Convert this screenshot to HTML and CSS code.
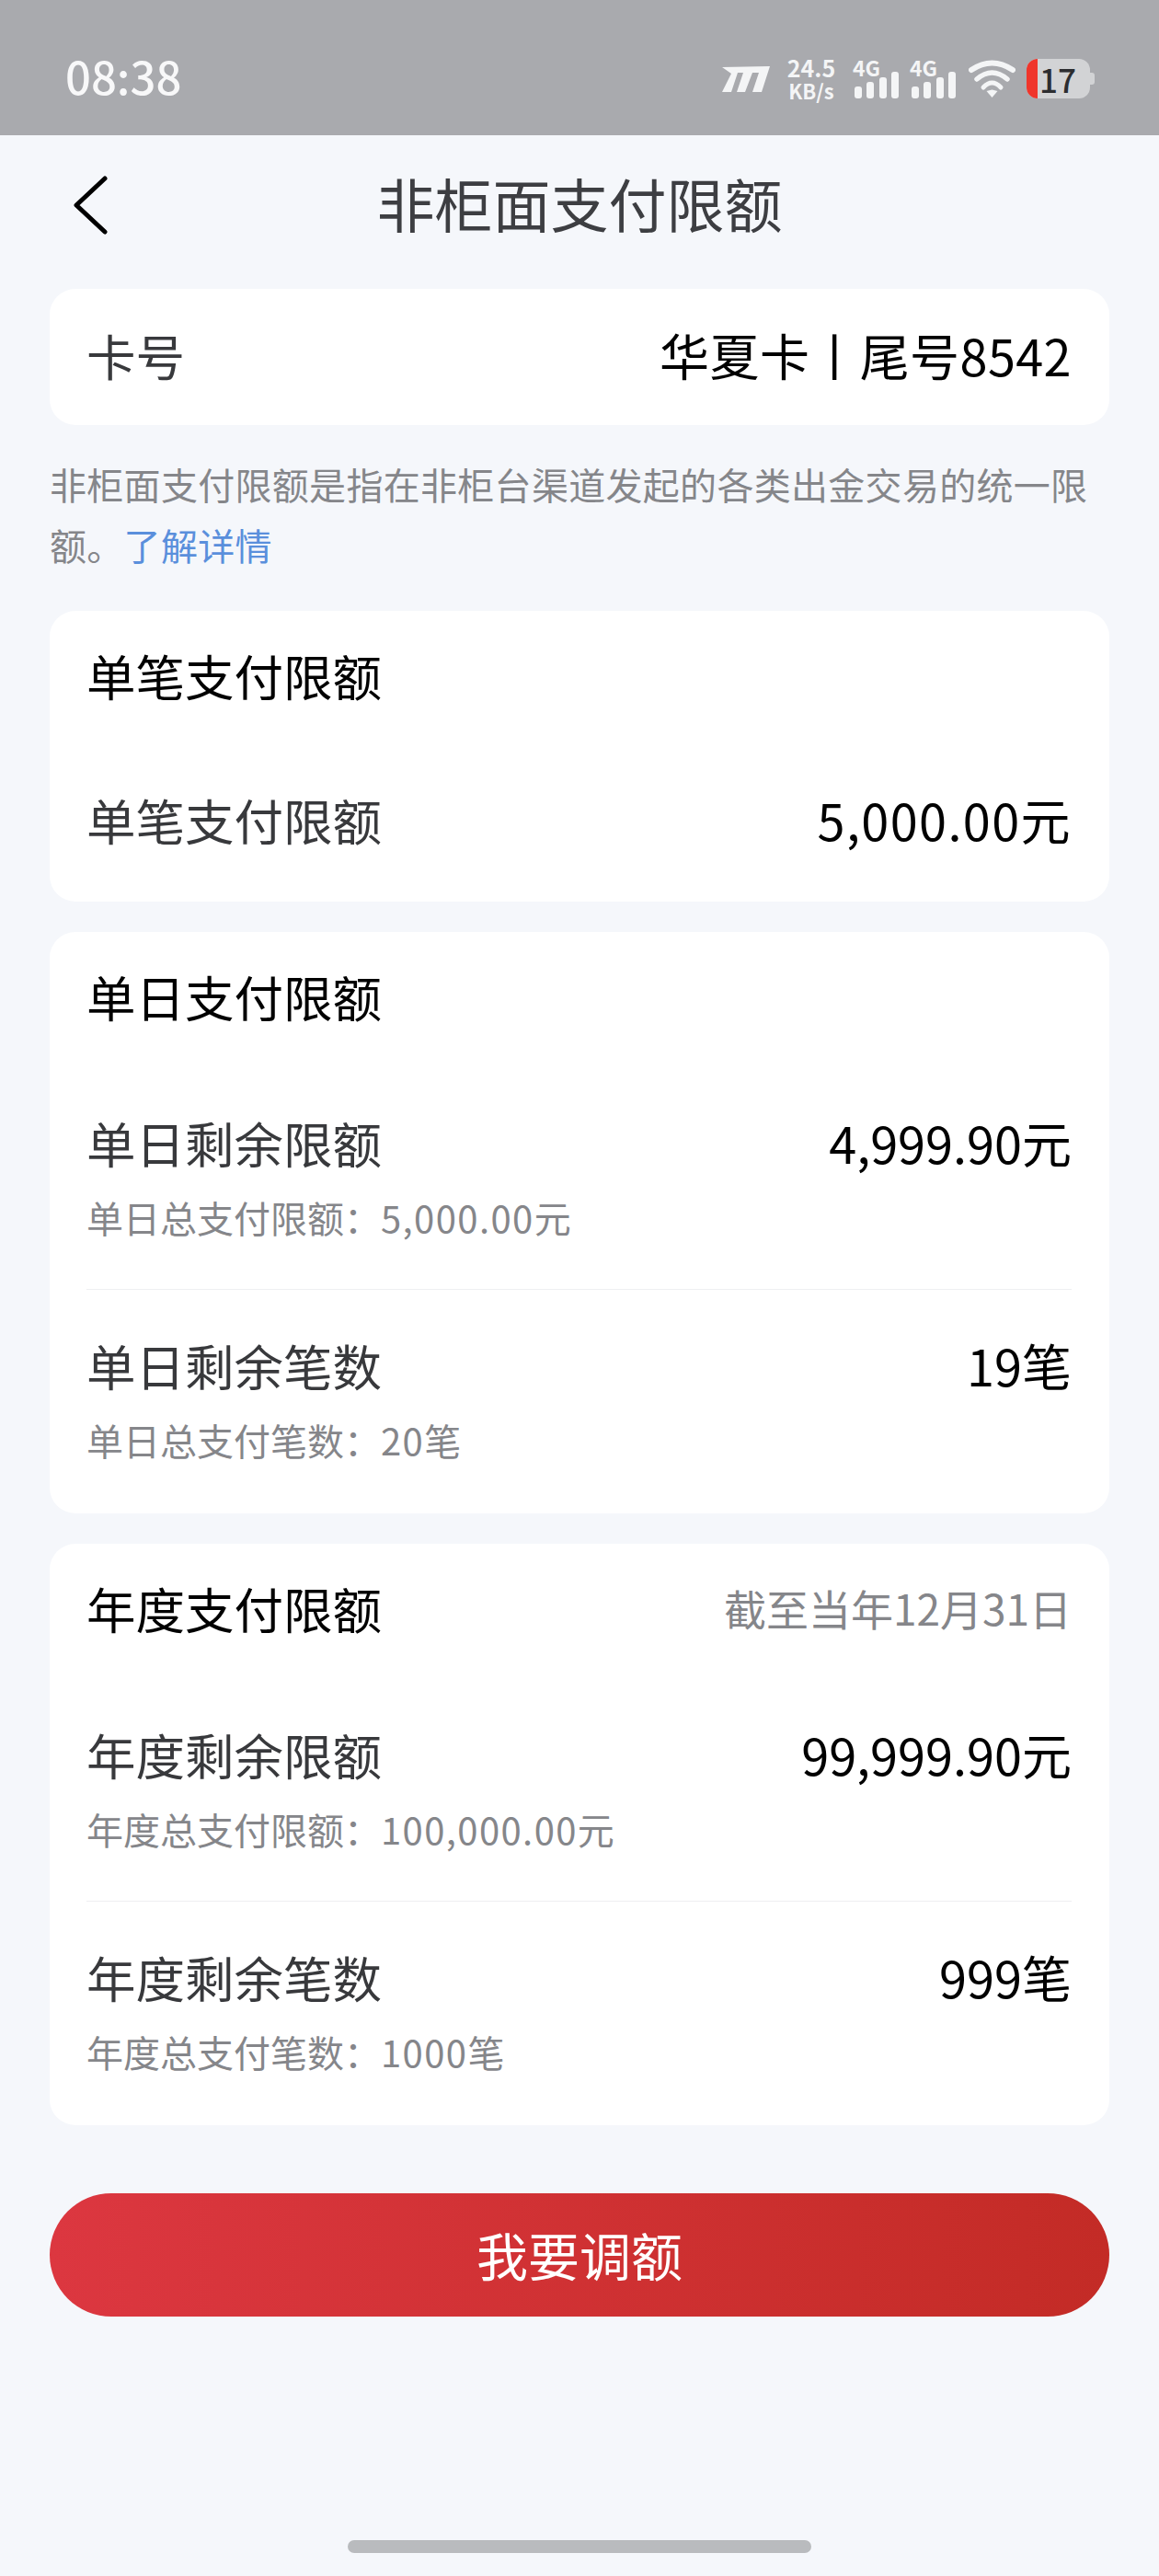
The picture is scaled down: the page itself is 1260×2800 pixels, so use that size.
FILE: index.html
```html
<!DOCTYPE html>
<html lang="zh-CN">
<head>
  <meta charset="UTF-8" />
  <meta name="viewport" content="width=device-width, initial-scale=1.0"/>
  <title>非柜面支付限额</title>
  <link rel="stylesheet" href="styles.css">
</head>
<body>
  <!-- 状态栏 -->
  <div class="status-bar">
    <span class="time">08:38</span>
    <div class="status-icons">
      <svg class="carrier" width="52" height="28" viewBox="0 0 52 28">
        <path d="M0 1L52 0L43 28H33L40 7H33L25 28H16L23 7H17L10 28H0L10 8Z" fill="#f4f5f6"/>
      </svg>
      <div class="speed"><span>24.5</span><span class="unit">KB/s</span></div>
      <div class="signal">
        <span class="net">4G</span>
        <div class="bars"><i class="b1"></i><i class="b2"></i><i class="b3"></i><i class="b4"></i></div>
      </div>
      <div class="signal">
        <span class="net">4G</span>
        <div class="bars"><i class="b1"></i><i class="b2"></i><i class="b3"></i><i class="b4"></i></div>
      </div>
      <svg class="wifi" width="51" height="42" viewBox="0 0 51 42" fill="none" stroke="#f4f5f6" stroke-linecap="round">
        <path d="M3 11Q25.5 -4 48 11" stroke-width="6"/>
        <path d="M9 21Q25.5 7 42 21" stroke-width="5.5"/>
        <path d="M16 30Q25.5 20 35 30" stroke-width="5"/>
        <path d="M19.5 34L25.5 32.5L31.5 34L25.5 41Z" fill="#f4f5f6" stroke="none"/>
      </svg>
      <div class="battery">
        <div class="battery-body"><span class="battery-low"></span><span class="battery-num">17</span></div>
        <span class="battery-cap"></span>
      </div>
    </div>
  </div>

  <!-- 标题栏 -->
  <div class="nav">
    <svg class="back" width="40" height="64" viewBox="0 0 40 64" fill="none" stroke="#000" stroke-width="5" stroke-linecap="round" stroke-linejoin="round">
      <path d="M36 3L5 32L36 61"/>
    </svg>
    <h1>非柜面支付限额</h1>
  </div>

  <div class="content">
    <div class="card card-no">
      <span class="row-label">卡号</span>
      <span class="row-value">华夏卡丨尾号8542</span>
    </div>

    <p class="note">非柜面支付限额是指在非柜台渠道发起的各类出金交易的统一限额。<a>了解详情</a></p>

    <div class="card">
      <div class="card-title"><span>单笔支付限额</span></div>
      <div class="row">
        <div class="row-main"><span class="row-label">单笔支付限额</span><span class="row-value num">5,000.00元</span></div>
      </div>
    </div>

    <div class="card">
      <div class="card-title"><span>单日支付限额</span></div>
      <div class="row first">
        <div class="row-main"><span class="row-label">单日剩余限额</span><span class="row-value">4,999.90元</span></div>
        <div class="row-sub">单日总支付限额：<span class="num">5,000.00元</span></div>
      </div>
      <div class="row last">
        <div class="row-main"><span class="row-label">单日剩余笔数</span><span class="row-value">19笔</span></div>
        <div class="row-sub">单日总支付笔数：<span class="num">20笔</span></div>
      </div>
    </div>

    <div class="card">
      <div class="card-title"><span>年度支付限额</span><span class="deadline">截至当年12月31日</span></div>
      <div class="row first">
        <div class="row-main"><span class="row-label">年度剩余限额</span><span class="row-value">99,999.90元</span></div>
        <div class="row-sub">年度总支付限额：<span class="num">100,000.00元</span></div>
      </div>
      <div class="row last">
        <div class="row-main"><span class="row-label">年度剩余笔数</span><span class="row-value">999笔</span></div>
        <div class="row-sub">年度总支付笔数：<span class="num">1000笔</span></div>
      </div>
    </div>

    <button class="adjust">我要调额</button>
  </div>

  <div class="home-bar"></div>
</body>
</html>
```

FILE: styles.css
```css
* {
  box-sizing: border-box;
  margin: 0;
  padding: 0;
}
body {
  font-family: "Noto Sans CJK SC", "Noto Sans", sans-serif;
  background-color: #f5f7fb;
  width: 1260px;
  height: 2800px;
  position: relative;
  overflow: hidden;
}
/* 状态栏 */
.status-bar {
  height: 147px;
  background-color: #a9aaae;
  padding: 24px 70px 0 71px;
  display: flex;
  justify-content: space-between;
  align-items: center;
}
.time {
  font-size: 49px;
  line-height: 52px;
  font-weight: 500;
  color: #f8f8f9;
  margin-bottom: 8px;
}
.status-icons {
  display: flex;
  align-items: center;
}
.carrier {
  margin-right: 19px;
}
.speed {
  display: flex;
  flex-direction: column;
  align-items: center;
  width: 52px;
  margin-right: 19px;
  color: #f4f5f6;
  font-weight: 700;
  font-size: 25px;
  line-height: 25px;
  white-space: nowrap;
}
.speed .unit {
  font-size: 22px;
}
.signal {
  position: relative;
  width: 50px;
  height: 42px;
  margin-right: 12px;
}
.net {
  position: absolute;
  left: 0;
  top: -4px;
  font-size: 23px;
  line-height: 24px;
  font-weight: 700;
  color: #f4f5f6;
}
.bars {
  position: absolute;
  left: 2px;
  bottom: 0;
  display: flex;
  align-items: flex-end;
  gap: 5.3px;
}
.bars i {
  display: block;
  width: 8px;
  background-color: #f4f5f6;
  border-radius: 3px;
}
.bars .b1 { height: 13px; }
.bars .b2 { height: 18px; }
.bars .b3 { height: 23px; }
.bars .b4 { height: 29px; }
.wifi {
  margin: 0 12px 0 2px;
}
.battery {
  display: flex;
  align-items: center;
}
.battery-body {
  width: 69px;
  height: 43px;
  border-radius: 12px;
  background-color: #d2d3d5;
  display: flex;
  align-items: center;
}
.battery-low {
  width: 12px;
  height: 100%;
  border-radius: 12px 0 0 12px;
  background-color: #f0352b;
}
.battery-num {
  margin-left: 2px;
  font-size: 35px;
  line-height: 43px;
  font-weight: 500;
  color: #2c2d30;
}
.battery-cap {
  width: 5px;
  height: 13px;
  background-color: #d2d3d5;
  border-radius: 0 3px 3px 0;
}
/* 标题栏 */
.nav {
  height: 167px;
  padding-bottom: 22px;
  position: relative;
  display: flex;
  justify-content: center;
  align-items: center;
}
.nav h1 {
  font-size: 63px;
  font-weight: 400;
  color: #3d3e42;
}
.back {
  position: absolute;
  left: 78px;
  top: 44px;
}
/* 内容区 */
.content {
  padding: 0 54px;
}
.card {
  background-color: #fff;
  border-radius: 28px;
  padding: 0 41px 0 40px;
  margin-bottom: 33px;
}
.card-no {
  height: 148px;
  padding-bottom: 6px;
  margin-bottom: 0;
  display: flex;
  justify-content: space-between;
  align-items: center;
}
.card-no .row-value {
  letter-spacing: 0.4px;
}
.row-label {
  font-size: 53.5px;
  color: #38393c;
}
.row-value {
  font-size: 54px;
  color: #000;
}
/* 含 0 的金额，数字略宽 */
.num {
  letter-spacing: 1.4px;
}
.note {
  font-size: 40px;
  line-height: 66px;
  letter-spacing: 0.3px;
  color: #85868a;
  padding: 31px 0 39px;
}
.note a {
  color: #5a8fdc;
}
.card-title {
  display: flex;
  justify-content: space-between;
  align-items: center;
  height: 138px;
  font-size: 53.5px;
  color: #000;
}
.deadline {
  font-size: 46px;
  color: #85868a;
}
.row-main {
  display: flex;
  justify-content: space-between;
  align-items: center;
  height: 78px;
}
.row {
  padding: 49px 0 51px;
}
.row.first {
  padding: 51px 0 48px;
  border-bottom: 1px solid #eeeff1;
}
.row.last {
  padding: 42px 0 50px;
}
.row-sub {
  margin-top: 13px;
  font-size: 40px;
  line-height: 60px;
  color: #85868a;
}
/* 调额按钮 */
.adjust {
  display: block;
  width: 100%;
  height: 134px;
  margin-top: 74px;
  padding-bottom: 4px;
  border: none;
  border-radius: 67px;
  background: linear-gradient(90deg, #dc3740, #c32b26);
  color: #fff;
  font-family: inherit;
  font-size: 56px;
}
.home-bar {
  position: absolute;
  left: 378px;
  top: 2761px;
  width: 504px;
  height: 14px;
  border-radius: 7px;
  background-color: #b9bbbe;
}
```
